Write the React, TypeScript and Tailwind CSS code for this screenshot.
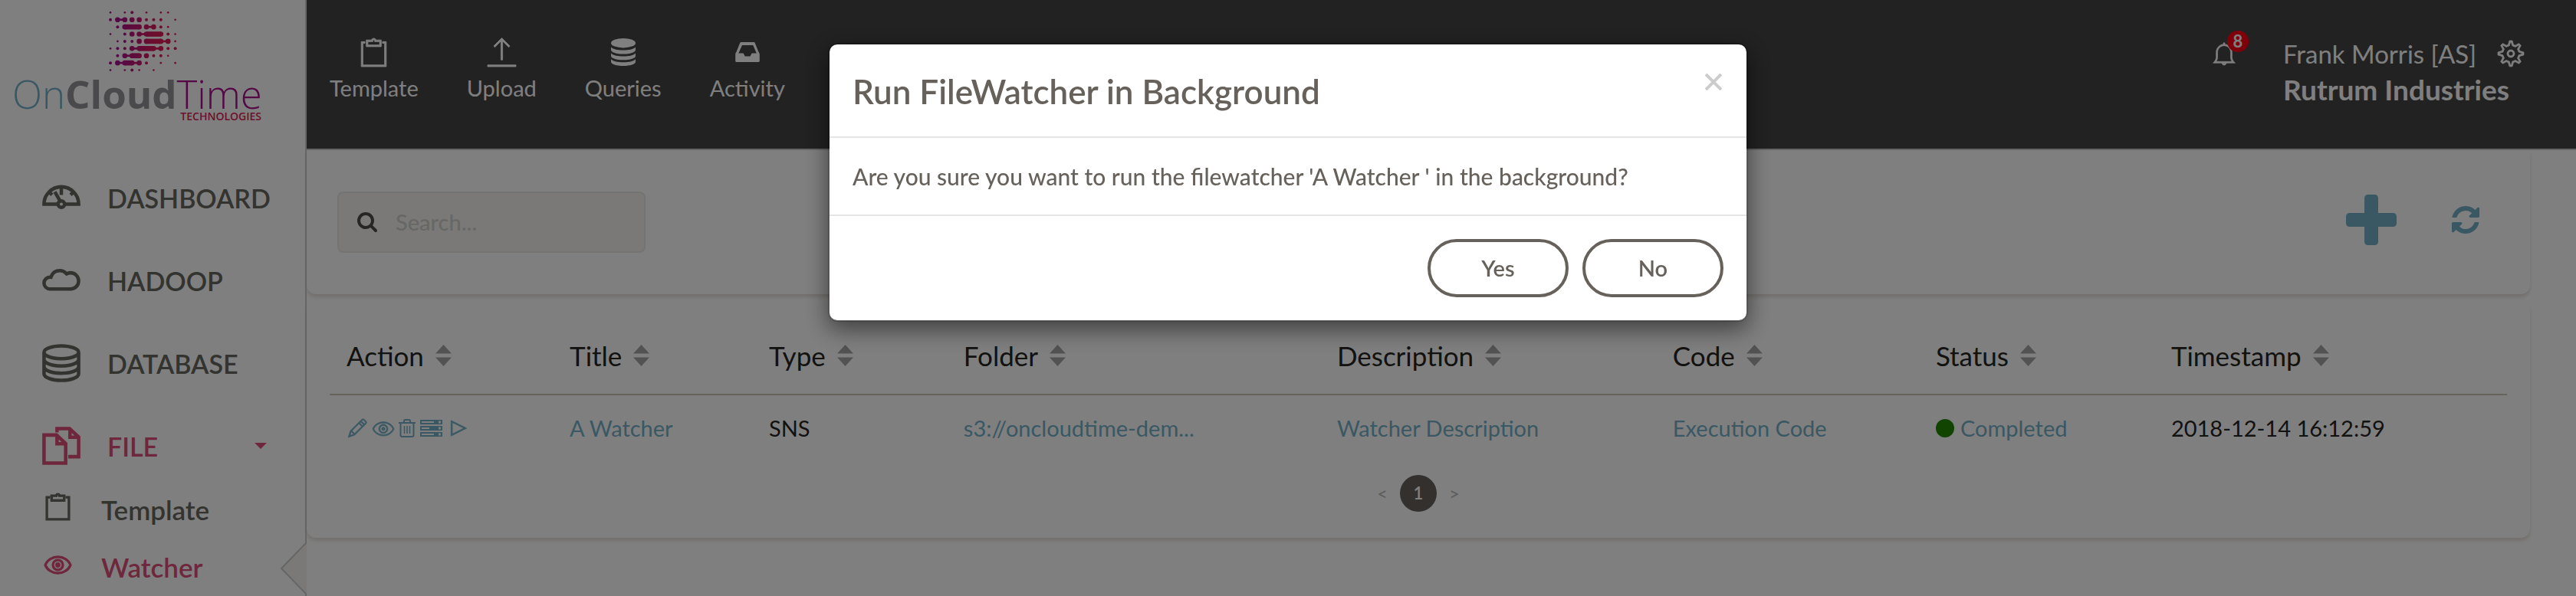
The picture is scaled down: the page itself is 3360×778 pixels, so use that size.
import type { ReactNode } from "react";
import {
  TfiBell,
  TfiClipboard,
  TfiCloud,
  TfiControlPlay,
  TfiDashboard,
  TfiEye,
  TfiFiles,
  TfiPencil,
  TfiServer,
  TfiSettings,
  TfiUpload,
} from "react-icons/tfi";

/* Each entry is [column, radius]; links are [from column, to column, half thickness]. */
type DotRow = { dots: [number, number][]; links?: [number, number, number][] };

const logoRows: DotRow[] = [
  { dots: [[0, 4], [2, 4], [3, 6], [5, 4], [7, 4], [8, 4]] },
  { dots: [[0, 6], [1, 10], [2, 10], [3, 10], [4, 10], [5, 6], [6, 6], [7, 6], [9, 4]], links: [[1, 2, 4]] },
  { dots: [[1, 6], [2, 10], [4, 10], [5, 10], [6, 10], [7, 6], [8, 4]], links: [[2, 4, 10], [5, 6, 4]] },
  { dots: [[0, 4], [2, 6], [3, 10], [4, 10], [5, 10], [7, 10], [8, 6], [9, 4]], links: [[4, 5, 4], [5, 7, 10]] },
  { dots: [[1, 4], [2, 6], [3, 6], [4, 10], [5, 10], [7, 10], [8, 10], [9, 4]], links: [[5, 7, 10], [7, 8, 4]] },
  { dots: [[0, 4], [1, 6], [2, 6], [3, 10], [4, 10], [6, 10], [7, 10], [8, 6], [9, 6]], links: [[3, 4, 4], [4, 6, 10], [6, 7, 4]] },
  { dots: [[1, 6], [2, 10], [3, 10], [4, 10], [5, 10], [6, 6], [7, 6], [8, 4]], links: [[2, 3, 4], [3, 4, 10]] },
  { dots: [[0, 6], [1, 10], [2, 10], [3, 10], [4, 10], [5, 6], [7, 4], [9, 4]], links: [[1, 2, 4], [2, 3, 10], [3, 4, 4]] },
  { dots: [[0, 4], [2, 4], [3, 6], [4, 4], [6, 4]] },
];

const PITCH = 28.2;

function LogoMark() {
  return (
    <svg viewBox="-12 -10 276 246" className="h-[82px] w-[92px]" aria-hidden="true">
      <defs>
        <linearGradient id="mark" gradientUnits="userSpaceOnUse" x1="0" y1="0" x2="254" y2="0">
          <stop offset="0.1" stopColor="#a8128e" />
          <stop offset="0.7" stopColor="#dc1c58" />
        </linearGradient>
      </defs>
      <g fill="url(#mark)">
        {logoRows.map((row, y) => (
          <g key={y}>
            {row.dots.map(([x, r]) => (
              <circle key={x} cx={x * PITCH} cy={y * PITCH} r={r} />
            ))}
            {(row.links ?? []).map(([a, b, h]) => (
              <rect key={a} x={a * PITCH} y={y * PITCH - h} width={(b - a) * PITCH} height={h * 2} />
            ))}
          </g>
        ))}
      </g>
    </svg>
  );
}

function CoinsIcon() {
  return (
    <svg viewBox="0 0 32 36" className="h-9 w-8" fill="currentColor" aria-hidden="true">
      <ellipse cx="16" cy="6.2" rx="16" ry="6.2" />
      <path d="M0 11.500c3 3 9 4 16 4s13-1 16-4v3.500c0 3.500-7 5.500-16 5.500s-16-2-16-5.500z" />
      <path d="M0 19.500c3 3 9 4 16 4s13-1 16-4v3.500c0 3.200-7 5.300-16 5.300s-16-2.100-16-5.300z" />
      <path d="M0 27.300c3 3 9 4 16 4s13-1 16-4v3.200c0 3.400-7 5.500-16 5.500s-16-2.100-16-5.500z" />
    </svg>
  );
}

function TrayIcon() {
  return (
    <svg viewBox="0 0 32 26" className="h-[26px] w-8" fill="currentColor" aria-hidden="true">
      <path
        fillRule="evenodd"
        d="M8.200 0h15.600c1 0 1.700.4 2.100 1.400l4.600 11.600c.9 1 1.300 2 1.300 3.200v8c0 1.200-.7 1.800-1.800 1.800h-28c-1.200 0-1.800-.7-1.800-1.800v-8c0-1.200.3-2.200 1.200-3.200l4.600-11.600c.5-1 1.200-1.400 2.200-1.400zM9 4l-4.600 10.500h6.200l2.100 4h6.800l2.100-4h6.200l-4.600-10.500z"
      />
    </svg>
  );
}

function PlusIcon() {
  return (
    <svg viewBox="0 -64 1408 1408" className="size-[66px]" fill="currentColor" aria-hidden="true">
      <path d="M1408 544v192q0 40-28 68t-68 28h-416v416q0 40-28 68t-68 28h-192q-40 0-68-28t-28-68v-416h-416q-40 0-68-28t-28-68v-192q0-40 28-68t68-28h416v-416q0-40 28-68t68-28h192q40 0 68 28t28 68v416h416q40 0 68 28t28 68z" />
    </svg>
  );
}

function RefreshIcon() {
  return (
    <svg viewBox="0 0 1536 1536" className="size-9" fill="currentColor" aria-hidden="true">
      <path d="M1511 928q0 5-1 7-64 268-268 434.5t-478 166.5q-146 0-282.5-55t-243.5-157l-129 129q-19 19-45 19t-45-19-19-45v-448q0-26 19-45t45-19h448q26 0 45 19t19 45-19 45l-137 137q71 66 161 102t187 36q134 0 250-65t186-179q11-17 53-117 8-23 30-23h192q13 0 22.500 9.500t9.500 22.500zm25-800v448q0 26-19 45t-45 19h-448q-26 0-45-19t-19-45 19-45l138-138q-148-137-349-137-134 0-250 65t-186 179q-11 17-53 117-8 23-30 23h-199q-13 0-22.500-9.500t-9.500-22.500v-7q65-268 270-434.500t480-166.500q146 0 284 55.500t245 156.500l130-129q19-19 45-19t45 19 19 45z" />
    </svg>
  );
}

function SearchIcon() {
  return (
    <svg viewBox="0 0 1664 1664" className="size-[26px] shrink-0" fill="currentColor" aria-hidden="true">
      <path d="M1152 704q0-185-131.500-316.500t-316.500-131.500-316.500 131.500-131.500 316.500 131.500 316.500 316.500 131.500 316.500-131.500 131.500-316.500zm512 832q0 52-38 90t-90 38q-54 0-90-38l-343-342q-179 124-399 124-143 0-273.500-55.500t-225-150-150-225-55.500-273.500 55.500-273.500 150-225 225-150 273.500-55.500 273.500 55.500 225 150 150 225 55.500 273.500q0 220-124 399l343 343q37 37 37 90z" />
    </svg>
  );
}

function TrashIcon() {
  return (
    <svg viewBox="0 0 22 24" className="h-6 w-[22px]" fill="none" stroke="currentColor" strokeWidth="2" aria-hidden="true">
      <path d="M0 5h22M7 4.500v-2q0-1.500 1.500-1.500h5q1.500 0 1.500 1.500v2M2.500 5v16q0 2 2 2h13q2 0 2-2v-16" />
      <path d="M7.500 9v10M11 9v10M14.500 9v10" strokeWidth="1.500" />
    </svg>
  );
}

function RackIcon() {
  return (
    <svg viewBox="0 0 29 22" className="h-[22px] w-[29px]" fill="currentColor" fillRule="evenodd" aria-hidden="true">
      <path d="M0 0h29v6h-29zM2 2v2h16v-2zM24 1.600v2.800h2.800v-2.800zM0 8h29v6h-29zM2 10v2h10v-2zM24 9.600v2.800h2.800v-2.800zM0 16h29v6h-29zM2 18v2h16v-2zM24 17.600v2.800h2.800v-2.800z" />
    </svg>
  );
}

function SortArrows() {
  return (
    <svg viewBox="0 0 21 28" className="h-7 w-[21px] text-[#a5a5a5]" fill="currentColor" aria-hidden="true">
      <path d="M10.500 0l10.500 11.500h-21zM0 16.500h21l-10.500 11.500z" />
    </svg>
  );
}

const heavy = "overflow-visible stroke-[0.6]";
const medium = "overflow-visible stroke-[0.4]";

function MenuLink({ icon, label, active, children }: { icon: ReactNode; label: string; active?: boolean; children?: ReactNode }) {
  return (
    <li>
      <a
        href="#"
        className={
          active
            ? "flex h-[88px] items-center pr-[50px] pl-14 text-[#de4e7a]"
            : "flex h-[88px] items-center pl-14 text-[#666660]"
        }
      >
        <span className="w-[84px] shrink-0 text-[48px]">{icon}</span>
        <span className="text-[34px] font-semibold">{label}</span>
        {children}
      </a>
    </li>
  );
}

function HeaderLink({ icon, label }: { icon: ReactNode; label: string }) {
  return (
    <a href="#" className="flex flex-col items-center gap-[11px] text-[37px]">
      <span className="flex h-9 items-center">{icon}</span>
      <span className="text-[29px] leading-9">{label}</span>
    </a>
  );
}

const columns: { label: string; width: string }[] = [
  { label: "Action", width: "w-[10.25%]" },
  { label: "Title", width: "w-[9.15%]" },
  { label: "Type", width: "w-[8.94%]" },
  { label: "Folder", width: "w-[17.15%]" },
  { label: "Description", width: "w-[15.42%]" },
  { label: "Code", width: "w-[12.08%]" },
  { label: "Status", width: "w-[10.81%]" },
  { label: "Timestamp", width: "w-[16.20%]" },
];

const cell = "pt-[23px] pl-[22px] leading-10";

function Sidebar() {
  return (
    <aside className="w-[400px] shrink-0 border-r-2 border-[#ccc] bg-white">
      <a href="#" className="mb-[57px] block w-[341px] pt-[13px] pl-4 font-['Open_Sans',sans-serif]">
        <span className="block pl-[124px]">
          <LogoMark />
        </span>
        <span className="mt-0.5 block text-right text-[51px] leading-[50px] font-light whitespace-nowrap text-[#75b1c7]">
          On<span className="font-bold text-[#949498]">Cloud</span>
          <span className="text-[#a8108c]">Time</span>
        </span>
        <span className="block text-right text-[14px] leading-[10px] font-semibold text-[#dc1e58]">TECHNOLOGIES</span>
      </a>
      <nav>
        <ul className="flex flex-col gap-5">
          <MenuLink icon={<TfiDashboard className={heavy} />} label="DASHBOARD" />
          <MenuLink icon={<TfiCloud className={heavy} />} label="HADOOP" />
          <MenuLink icon={<TfiServer className={heavy} />} label="DATABASE" />
          <MenuLink icon={<TfiFiles className={heavy} />} label="FILE" active>
            <svg viewBox="0 0 16 8" className="ml-auto h-2 w-4" fill="currentColor" aria-hidden="true">
              <path d="M0 0h16l-8 8z" />
            </svg>
          </MenuLink>
        </ul>
        <ul className="mt-0.5 text-[35px] font-semibold">
          <li>
            <a href="#" className="flex h-[75px] items-center pl-[58px] text-[#666660]">
              <span className="w-[74px] pb-2 text-[35px]">
                <TfiClipboard className={heavy} />
              </span>
              Template
            </a>
          </li>
          <li className="relative">
            <a href="#" className="flex h-[75px] items-center pl-[58px] text-[#de4e7a]">
              <span className="w-[74px] pb-2 text-[35px]">
                <TfiEye className={heavy} />
              </span>
              Watcher
            </a>
            <svg viewBox="0 0 34 66" className="absolute top-1.5 -right-0.5 h-[66px] w-[34px]" aria-hidden="true">
              <path d="M34 0L1 33l33 33z" fill="#f4f3ef" />
              <path d="M33 0L1 33l32 33" fill="none" stroke="#ccc" strokeWidth="2" />
            </svg>
          </li>
        </ul>
      </nav>
    </aside>
  );
}

function Header() {
  return (
    <header className="flex h-[196px] items-start justify-between border-b-2 border-[#ccc] bg-[#444] pt-[50px] pr-[68px] pl-[30px] text-white">
      <nav className="flex gap-[63px]">
        <HeaderLink icon={<TfiClipboard className={medium} />} label="Template" />
        <HeaderLink icon={<TfiUpload className={medium} />} label="Upload" />
        <HeaderLink icon={<CoinsIcon />} label="Queries" />
        <HeaderLink icon={<TrayIcon />} label="Activity" />
      </nav>
      <div className="flex gap-[61px]">
        <button type="button" aria-label="Notifications" className="relative mt-1 h-8 text-[32px]">
          <TfiBell className={medium} />
          <span className="absolute -top-3.5 left-5 flex size-7 items-center justify-center rounded-full bg-[#ff0016] text-[22px] leading-none font-bold">
            8
          </span>
        </button>
        <div className="w-[314px]">
          <div className="flex items-center justify-between text-[33px] leading-10">
            <span>Frank Morris [AS]</span>
            <button type="button" aria-label="Settings" className="text-[34px]">
              <TfiSettings className={medium} />
            </button>
          </div>
          <div className="text-[37px] leading-[54px] font-bold whitespace-nowrap">Rutrum Industries</div>
        </div>
      </div>
    </header>
  );
}

function Dialog() {
  const pill = "h-[76px] w-[184px] rounded-full border-4 border-[#66615b] text-[29px] font-semibold";
  return (
    <div className="fixed inset-0 flex items-start justify-center bg-black/50 pt-14">
      <div
        role="dialog"
        aria-labelledby="dialog-title"
        className="w-[1200px] max-w-full rounded-xl border-2 border-black/20 bg-white bg-clip-padding text-[#66615b] shadow-[0_10px_30px_rgba(0,0,0,0.5)]"
      >
        <div className="flex items-start justify-between border-b-2 border-[#e5e5e5] pt-[30px] pr-8 pb-7 pl-[30px]">
          <h4 id="dialog-title" className="text-[44px] leading-[62px] font-semibold">
            Run FileWatcher in Background
          </h4>
          <button type="button" aria-label="Close" className="mt-2 text-[#ccc]">
            <svg viewBox="0 0 22 22" className="size-[22px]" fill="none" stroke="currentColor" strokeWidth="4" aria-hidden="true">
              <path d="M1 1l20 20M21 1l-20 20" />
            </svg>
          </button>
        </div>
        <p className="border-b-2 border-[#e5e5e5] px-[30px] py-[30px] text-[30px] leading-10 font-medium">
          Are you sure you want to run the filewatcher 'A Watcher ' in the background?
        </p>
        <div className="flex justify-end gap-[18px] px-[30px] py-[30px]">
          <button type="button" className={pill}>
            Yes
          </button>
          <button type="button" className={pill}>
            No
          </button>
        </div>
      </div>
    </div>
  );
}

export default function App() {
  return (
    <div className="flex min-h-screen bg-white font-['Lato',sans-serif]">
      <Sidebar />
      <div className="min-w-0 flex-1">
        <Header />
        <main className="flex flex-col gap-2 pr-[60px] text-[#75b1c7]">
          <section className="flex h-[188px] items-center justify-between rounded-b-xl bg-white pr-[66px] pl-10 shadow-[0_4px_4px_rgba(204,197,185,0.5)]">
            <label className="flex h-20 w-[402px] items-center gap-6 rounded-lg border-2 border-[#e8e7e3] bg-[#f4f3ef] px-6 text-[#4c4c4c]">
              <SearchIcon />
              <input
                type="text"
                aria-label="Search"
                placeholder="Search..."
                className="min-w-0 flex-1 bg-transparent text-[29px] font-medium outline-none placeholder:text-[#cfcfca]"
              />
            </label>
            <div className="flex items-center gap-[72px] pb-1.5">
              <button type="button" aria-label="Add">
                <PlusIcon />
              </button>
              <button type="button" aria-label="Refresh">
                <RefreshIcon />
              </button>
            </div>
          </section>
          <section className="rounded-xl bg-white px-[30px] pt-[30px] pb-[34px] shadow-[0_4px_4px_rgba(204,197,185,0.5)]">
            <table className="w-full table-fixed text-left text-[29px]">
              <thead>
                <tr className="border-b-2 border-[#ccc5b9] text-[35px] text-[#252422]">
                  {columns.map((c) => (
                    <th key={c.label} scope="col" className={c.width + " pt-5 pb-7 pl-[22px] leading-[44px] font-normal"}>
                      <span className="flex items-center gap-[15px]">
                        {c.label}
                        <SortArrows />
                      </span>
                    </th>
                  ))}
                </tr>
              </thead>
              <tbody>
                <tr>
                  <td className={cell}>
                    <span className="flex h-10 items-center gap-1.5 text-[28px]">
                      <button type="button" aria-label="Edit">
                        <TfiPencil className={medium} />
                      </button>
                      <button type="button" aria-label="View">
                        <TfiEye className={medium} />
                      </button>
                      <button type="button" aria-label="Delete">
                        <TrashIcon />
                      </button>
                      <button type="button" aria-label="Log">
                        <RackIcon />
                      </button>
                      <button type="button" aria-label="Run" className="text-[30px]">
                        <TfiControlPlay className={medium} />
                      </button>
                    </span>
                  </td>
                  <td className={cell}>
                    <a href="#">A Watcher</a>
                  </td>
                  <td className={cell + " text-[#252422]"}>SNS</td>
                  <td className={cell}>
                    <a href="#">s3://oncloudtime-dem...</a>
                  </td>
                  <td className={cell}>
                    <a href="#">Watcher Description</a>
                  </td>
                  <td className={cell}>
                    <a href="#">Execution Code</a>
                  </td>
                  <td className={cell}>
                    <a href="#" className="flex items-center gap-2">
                      <span className="size-6 rounded-full bg-[#228800]" />
                      Completed
                    </a>
                  </td>
                  <td className={cell + " text-[#252422]"}>2018-12-14 16:12:59</td>
                </tr>
              </tbody>
            </table>
            <nav aria-label="Pages" className="mt-[41px] flex items-center justify-center gap-4 text-[24px] leading-none text-[#b8b8b8]">
              <button type="button">&lt;</button>
              <button type="button" className="size-12 rounded-full bg-[#66615b] text-[22px] font-semibold text-white">
                1
              </button>
              <button type="button">&gt;</button>
            </nav>
          </section>
        </main>
      </div>
      <Dialog />
    </div>
  );
}
